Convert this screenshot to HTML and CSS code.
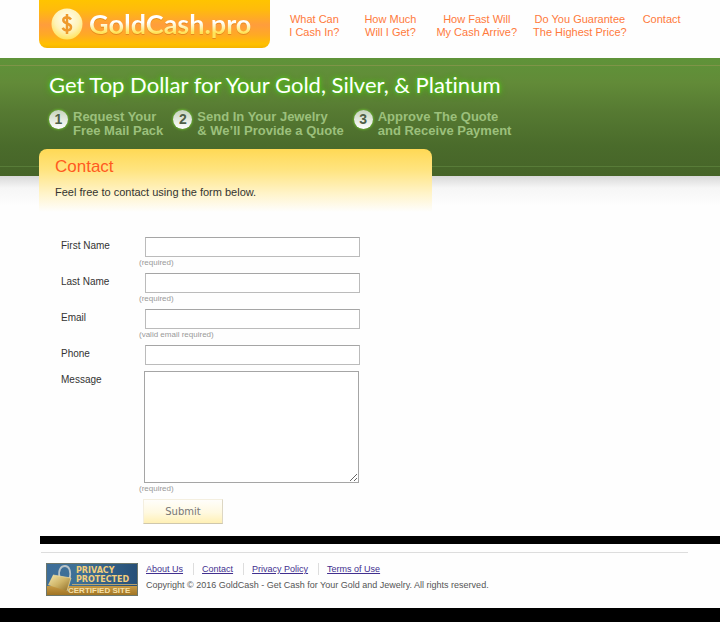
FILE: index.html
```html
<!DOCTYPE html>
<html lang="en">
<head>
<meta charset="utf-8">
<meta name="viewport" content="width=device-width, initial-scale=1">
<title>Contact - GoldCash.pro</title>
<link rel="stylesheet" href="styles.css">
</head>
<body>
<header class="header">
  <a class="logo" href="#">
    <svg class="logo-coin" viewBox="0 0 32 32" aria-hidden="true">
      <defs>
        <radialGradient id="coin" cx=".5" cy=".35" r=".65">
          <stop offset="0" stop-color="#fffef2"/>
          <stop offset=".6" stop-color="#fff3b8"/>
          <stop offset="1" stop-color="#ffe45e"/>
        </radialGradient>
      </defs>
      <circle cx="16" cy="16" r="15.5" fill="url(#coin)"/>
      <path d="M20 11.500C19 10 17.600 9.300 16 9.300c-2.300 0-3.700 1.100-3.700 2.800 0 4.200 7.700 2.600 7.700 7 0 2-1.600 3.300-4 3.300-2 0-3.500-.8-4.300-2.600M16 6v20" fill="none" stroke="#ee9a2c" stroke-width="2.500"/>
    </svg>
    <span class="logo-name">GoldCash.pro</span>
  </a>
  <nav class="nav">
    <a href="#">What Can<br>I Cash In?</a>
    <a href="#">How Much<br>Will I Get?</a>
    <a href="#">How Fast Will<br>My Cash Arrive?</a>
    <a href="#">Do You Guarantee<br>The Highest Price?</a>
    <a href="#">Contact</a>
  </nav>
</header>

<section class="banner">
  <h1>Get Top Dollar for Your Gold, Silver, &amp; Platinum</h1>
  <ol class="steps">
    <li><span class="number">1</span><span>Request Your<br>Free Mail Pack</span></li>
    <li><span class="number">2</span><span>Send In Your Jewelry<br>&amp; We’ll Provide a Quote</span></li>
    <li><span class="number">3</span><span>Approve The Quote<br>and Receive Payment</span></li>
  </ol>
</section>

<main class="main">
  <div class="intro">
    <h2>Contact</h2>
    <p>Feel free to contact using the form below.</p>
  </div>
  <form class="form">
    <label for="first">First Name</label>
    <div class="field"><input id="first" type="text"><small>(required)</small></div>
    <label for="last">Last Name</label>
    <div class="field"><input id="last" type="text"><small>(required)</small></div>
    <label for="email">Email</label>
    <div class="field"><input id="email" type="email"><small>(valid email required)</small></div>
    <label for="phone">Phone</label>
    <div class="field"><input id="phone" type="tel"></div>
    <label for="message">Message</label>
    <div class="field"><textarea id="message"></textarea><small>(required)</small></div>
    <button type="submit">Submit</button>
  </form>
</main>

<footer class="footer">
  <div class="footer-body">
    <svg class="badge" viewBox="0 0 92 33" role="img" aria-label="Privacy protected certified site">
      <defs>
        <linearGradient id="sky" x1="0" y1="0" x2="1" y2="0">
          <stop offset="0" stop-color="#3d6d99"/>
          <stop offset=".35" stop-color="#3f7196"/>
          <stop offset="1" stop-color="#264f77"/>
        </linearGradient>
        <linearGradient id="gold" x1="0" y1="0" x2="0" y2="1">
          <stop offset="0" stop-color="#c79a45"/>
          <stop offset="1" stop-color="#9c7020"/>
        </linearGradient>
        <linearGradient id="brass" x1="0" y1="0" x2="1" y2="1">
          <stop offset="0" stop-color="#f3e7ae"/>
          <stop offset=".5" stop-color="#cfb467"/>
          <stop offset="1" stop-color="#8d6a24"/>
        </linearGradient>
      </defs>
      <path d="M0 0h92v33H0z" fill="url(#sky)"/>
      <path d="M0 23h92v10H0z" fill="url(#gold)"/>
      <path d="M13.500 14C12 7 15 3 19 3s6.500 5 4.500 13" fill="none" stroke="#b9c4c8" stroke-width="1.800"/>
      <path d="M7 12l18 3-4 13-19-6z" fill="url(#brass)"/>
      <path d="M7 12l18 3-4 13" fill="none" stroke="#f0dda0" stroke-width=".7"/>
      <path d="M26 21.500h65" stroke="#d8b469" stroke-width=".8"/>
      <g class="badge-title">
        <text x="30" y="10">PRIVACY</text>
        <text x="30" y="19">PROTECTED</text>
      </g>
      <text class="badge-caption" x="22" y="30">CERTIFIED SITE</text>
      <path d="M.5.5h91v32H.5z" fill="none" stroke="#6d776b"/>
    </svg>
    <div>
      <nav class="links">
        <a href="#">About Us</a>
        <a href="#">Contact</a>
        <a href="#">Privacy Policy</a>
        <a href="#">Terms of Use</a>
      </nav>
      <p class="copyright">Copyright © 2016 GoldCash - Get Cash for Your Gold and Jewelry. All rights reserved.</p>
    </div>
  </div>
</footer>
</body>
</html>
```
FILE: styles.css
```css
* {
  box-sizing: border-box;
}

body {
  margin: 0;
  background: #000;
  color: #333;
  font-family: "Liberation Sans", Arial, sans-serif;
}

h1, h2, p, ol {
  margin: 0;
  padding: 0;
  font-weight: normal;
}

.header {
  display: flex;
  align-items: flex-start;
  padding: 0 24px 10px 39px;
  background: #fefefe;
}

.logo {
  display: flex;
  align-items: center;
  gap: 6px;
  padding: 0 19px 0 12px;
  height: 48px;
  border-radius: 0 0 8px 8px;
  background: linear-gradient(#ffc400 0%, #ffbb0c 20%, #ff9d3c 52%, #ffa925 72%, #ffc000 92%, #f5b400 100%);
  text-decoration: none;
}

.logo-coin {
  width: 32px;
  height: 32px;
}

.logo-name {
  background: linear-gradient(#fff 45%, #ffe45a 75%);
  background-clip: text;
  color: transparent;
  filter: drop-shadow(0 1px 0 #e58a1c);
  font: bold 27px/34px Lato, sans-serif;
}

.nav {
  display: flex;
  padding: 13px 0 0 6px;
}

.nav a {
  min-width: 76px;
  padding: 0 8px;
  color: #ff7a3c;
  font-size: 11px;
  line-height: 13px;
  text-align: center;
  text-decoration: none;
  white-space: nowrap;
}

.nav a:last-child {
  min-width: 0;
}

.banner {
  padding: 12px 0 38px 49px;
  border-top: 1px solid #5f9339;
  background:
    linear-gradient(#7f9448, #7f9448) 0 6px / 100% 1px no-repeat,
    linear-gradient(#587c38, #587c38) 0 107px / 100% 1px no-repeat,
    linear-gradient(#5f9339 0%, #628b38 20%, #567a32 45%, #4a6b2b 75%, #466428 100%);
}

.banner h1 {
  color: #fff;
  font: 22px/28px Lato, sans-serif;
  font-variant-ligatures: none;
  text-shadow: 0 0 3px #55c01c, 0 0 5px #55c01c, 0 1px 7px #4fae1c;
}

.steps {
  display: flex;
  gap: 10px;
  margin-top: 11px;
  color: #9cc07c;
  font-size: 13px;
  font-weight: bold;
  line-height: 14px;
  list-style: none;
}

.steps li {
  display: flex;
  gap: 5px;
}

.number {
  flex: none;
  width: 19px;
  height: 19px;
  border-radius: 50%;
  background: linear-gradient(#c5d3bc, #fff);
  box-shadow: 0 0 2px 1px #65ad2e;
  color: #4f5f47;
  font-size: 14px;
  line-height: 19px;
  text-align: center;
}

.main {
  display: flow-root;
  padding: 0 0 12px 39px;
  background: linear-gradient(#d9d9d9, #f6f6f6 12px, #fefefe 30px);
}

/* The intro panel laps over the bottom of the banner. */
.intro {
  position: relative;
  top: -27px;
  width: 393px;
  max-width: 100%;
  margin-bottom: -27px;
  padding: 7px 16px 20px;
  border-radius: 8px 8px 0 0;
  background: linear-gradient(#ffd955, #ffe480 30%, #fff3c6 62%, #fefefe 90%);
}

.intro h2 {
  color: #ff5a1f;
  font-size: 17px;
  line-height: 22px;
}

.intro p {
  margin-top: 7px;
  font-size: 11px;
  line-height: 14px;
}

.form {
  display: grid;
  grid-template-columns: 78px minmax(0, 221px);
  row-gap: 6px;
  padding: 18px 0 0 22px;
}

.form label {
  padding-top: 2px;
  font-size: 10px;
  line-height: 14px;
}

.field {
  display: flex;
  flex-direction: column;
}

.field input,
.field textarea {
  width: 215px;
  max-width: 100%;
  margin: 0 0 0 6px;
  border: 1px solid #bbb;
  border-radius: 0;
  outline: 0;
  background: #fff;
}

.field input {
  height: 20px;
  border-top-color: #a5a5a5;
}

.field textarea {
  height: 112px;
  margin-left: 5px;
  border-color: #a5a5a5;
  resize: both;
}

.field small {
  margin-bottom: -2px;
  color: #999;
  font-size: 8px;
  line-height: 12px;
}

.form button {
  grid-column: 2;
  width: 80px;
  height: 25px;
  margin-left: 4px;
  border: 1px solid #f4efe0;
  border-right-color: #ddd7c4;
  border-bottom-color: #cfc7ac;
  background: linear-gradient(#fffefb, #fff9e0 55%, #fff0b5);
  color: #777;
  font: 10px/14px "DejaVu Sans", Verdana, sans-serif;
}

.footer {
  margin-bottom: 14px;
  padding: 16px 32px 12px 41px;
  background:
    linear-gradient(#000, #000) 40px 0 / 100% 8px no-repeat,
    #fefefe;
}

.footer-body {
  display: flex;
  gap: 8px;
  padding: 10px 0 0 5px;
  border-top: 1px solid #ddd;
}

.badge {
  flex: none;
  width: 92px;
  height: 33px;
}

.badge text {
  font-family: "Liberation Sans", Arial, sans-serif;
  font-weight: bold;
}

.badge-title text {
  fill: #f3cf7c;
  font-family: "DejaVu Sans", Verdana, sans-serif;
  font-size: 8px;
}

.badge-caption {
  fill: #f5e0a8;
  font-size: 8px;
}

.links {
  display: flex;
  line-height: 12px;
}

.links a {
  color: #42308f;
  font-size: 9px;
}

.links a + a {
  margin-left: 10px;
  padding-left: 8px;
  border-left: 1px solid #ddd;
}

.copyright {
  margin-top: 4px;
  color: #555;
  font-size: 9px;
  line-height: 12px;
}
```
